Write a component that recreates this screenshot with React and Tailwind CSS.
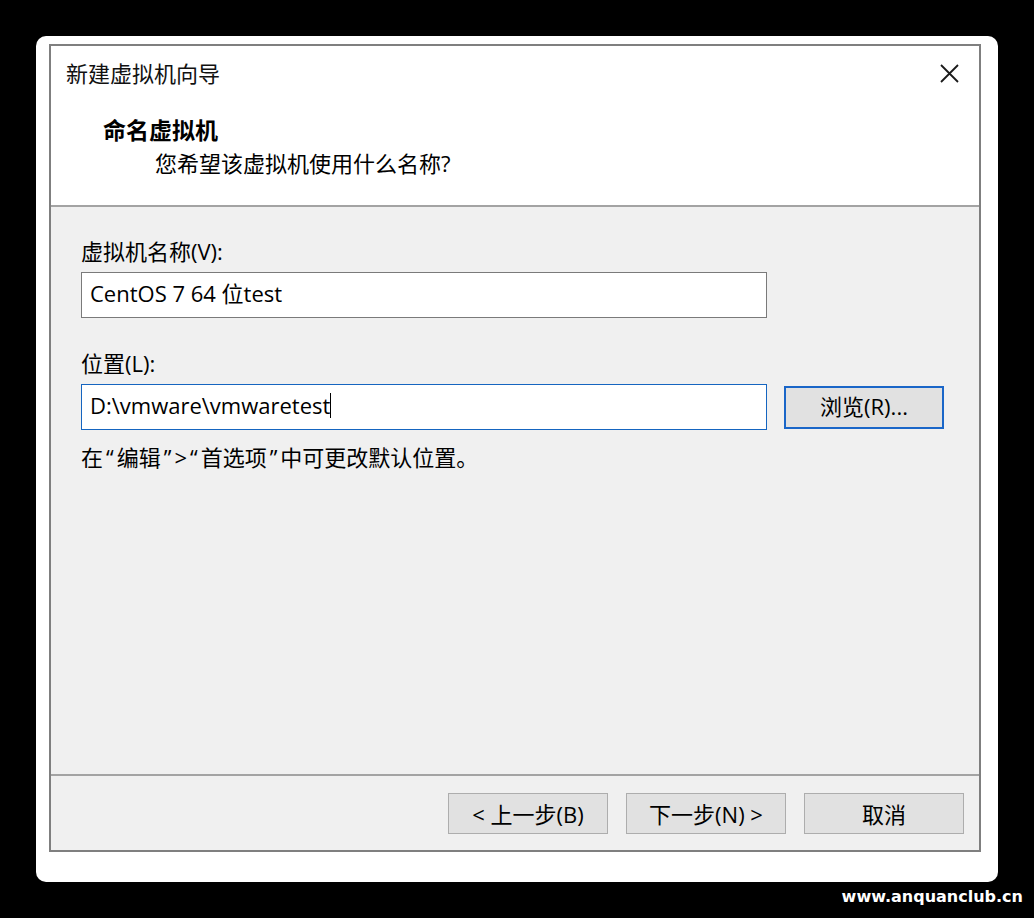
import React from "react";

const font = { fontFamily: '"Open Sans", "Noto Sans CJK SC", sans-serif' };

function CloseIcon() {
  return (
    <svg width="21" height="21" viewBox="0 0 21 21" className="block">
      <path d="M2 2 L19 19 M19 2 L2 19" stroke="#1a1a1a" strokeWidth="1.8" fill="none" />
    </svg>
  );
}

function Button({ children, className = "" }) {
  return (
    <div
      className={
        "h-[41px] w-[160px] flex items-center justify-center bg-[#e1e1e1] border border-[#adadad] text-[22px] text-black leading-none " +
        className
      }
    >
      {children}
    </div>
  );
}

function Q({ children }) {
  return <span className="px-[3px]">{children}</span>;
}

export default function NewVmWizard() {
  return (
    <div className="w-[1034px] h-[918px] bg-black pl-[36px] pt-[36px]" style={font}>
      <div className="w-[962px] h-[846px] bg-white rounded-[10px] pl-[13px] pt-[8px]">
        <div className="w-[932px] h-[808px] border-2 border-[#7f7f7f] flex flex-col">
          {/* header */}
          <div className="bg-white h-[161px] border-b-2 border-[#a3a3a3] shrink-0">
            <div className="flex items-center justify-between pl-[15px] pr-[19px] pt-[12px] h-[42px]">
              <span className="text-[22px] leading-[30px] text-[#111]">新建虚拟机向导</span>
              <CloseIcon />
            </div>
            <div className="pl-[52px] mt-[27px] h-[30px] leading-[30px] text-[23px] font-bold text-black">
              命名虚拟机
            </div>
            <div className="pl-[104px] mt-[3px] h-[30px] leading-[30px] text-[22px] text-black">
              您希望该虚拟机使用什么名称?
            </div>
          </div>

          {/* body */}
          <div className="flex-1 bg-[#f0f0f0] pl-[30px] pt-[29px]">
            <div className="h-[30px] leading-[30px] text-[22px] text-black">虚拟机名称(V):</div>
            <div className="mt-[6px] w-[686px] h-[46px] bg-white border border-[#7a7a7a] pl-[8px] pb-[3px] flex items-center text-[22px] text-black">
              CentOS 7 64 位test
            </div>

            <div className="mt-[30px] h-[30px] leading-[30px] text-[22px] text-black">位置(L):</div>
            <div className="mt-[6px] flex items-center">
              <div className="w-[686px] h-[46px] bg-white border border-[#1565c0] pl-[8px] pb-[3px] flex items-center text-[22px] text-black">
                <span>D:\vmware\vmwaretest</span>
                <span className="inline-block w-[1px] h-[25px] bg-black" />
              </div>
              <div className="ml-[17px] w-[160px] h-[43px] bg-[#e1e1e1] border-2 border-[#1a66c8] pb-[2px] flex items-center justify-center text-[22px] text-black">
                浏览(R)...
              </div>
            </div>

            <div className="mt-[12px] h-[30px] leading-[30px] text-[22px] text-black">
              在<Q>“</Q>编辑<Q>”</Q>&gt;<Q>“</Q>首选项<Q>”</Q>中可更改默认位置。
            </div>
          </div>

          {/* footer */}
          <div className="h-[76px] shrink-0 bg-[#f0f0f0] border-t-2 border-[#a3a3a3] flex justify-end gap-[18px] pt-[17px] pr-[15px]">
            <Button>&lt; 上一步(B)</Button>
            <Button>下一步(N) &gt;</Button>
            <Button>取消</Button>
          </div>
        </div>
      </div>
      <div
        className="mt-[3px] pr-[11px] text-right text-white text-[16px] font-bold leading-[24px]"
        style={{ fontFamily: '"DejaVu Sans", sans-serif' }}
      >
        www.anquanclub.cn
      </div>
    </div>
  );
}
